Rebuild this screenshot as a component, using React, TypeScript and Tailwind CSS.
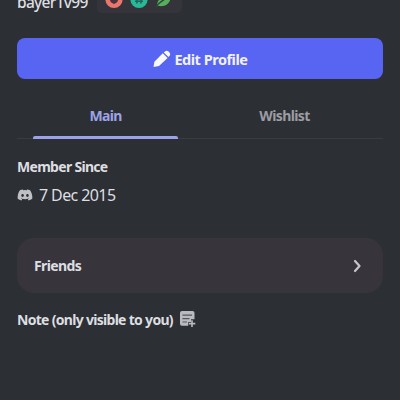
import { FaDiscord } from "react-icons/fa";

function Badges() {
  return (
    <div className="ml-[9px] h-[13px] w-[85px] rounded-b-[5px] bg-[#35343a]">
      <svg width="85" height="13" viewBox="0 0 85 13">
        <circle cx="17" cy="-.5" r="8.6" fill="#e9776d" />
        <path d="M13 0 V-4 H21 V0 C21 2 19 3 17 4 C15 3 13 2 13 0Z" fill="#49343b" />
        <circle cx="42" cy="-.5" r="8.6" fill="#28b999" />
        <path d="M40.5 -4 L39.8 3.5 M44.5 -4 L43.8 3.5 M38 1.2 H46" stroke="#20645b" strokeWidth="1.6" />
        <path d="M60 6 C60 0 64 -4 74 -5 C74 2 70 7 62 6Z" fill="#58ae5f" />
        <path d="M59 7 C63 1 67 0 71 -3" stroke="#294b35" strokeWidth="1.5" fill="none" />
      </svg>
    </div>
  );
}

function PencilIcon() {
  return (
    <svg width="18" height="18" viewBox="0 0 18 18" fill="#f8f8ff">
      <path d="M.5 17 L1.4 11.7 L9.8 3.3 L14.6 8 L6 16Z" />
      <path d="M10.8 2.4 L12.2 1.2 Q14 .1 15.5 1.5 L16.5 2.5 Q17.9 4 16.8 5.6 L15.5 7.1Z" />
    </svg>
  );
}

function NoteIcon() {
  return (
    <svg className="-mt-[2px]" width="17" height="17" viewBox="0 0 17 17" fill="none">
      <path d="M2 0 H12.5 Q14.5 0 14.5 2 V8.3 H11 V11 H8.2 V14.8 H2 Q0 14.8 0 12.8 V2 Q0 0 2 0Z" fill="#b9babf" />
      <path d="M2.4 4.2 H12 M2.4 7.7 H9.5 M2.4 11 H7" stroke="#55565b" strokeWidth="1.2" />
      <path d="M12 9.2 V16 M8.8 12.6 H15.3" stroke="#b9babf" strokeWidth="1.6" />
    </svg>
  );
}

export default function App() {
  return (
    <main className="h-[400px] w-[400px] overflow-hidden bg-[#2c2f33] px-[17px] font-['Noto_Sans',sans-serif] text-[14px] leading-5 font-semibold text-[#dddee1]">
      <header className="flex h-[38px] items-start">
        <span className="-mt-[8px] w-[71px] text-[15.5px] font-medium tracking-[-0.7px] whitespace-nowrap">bayer1v99</span>
        <Badges />
      </header>
      <button className="flex h-[41px] w-[366px] items-center justify-center rounded-[8px] bg-[#5865f2] pt-px text-[#f1f2ff]">
        <span className="-mt-px mr-[4px]"><PencilIcon /></span>
        <span className="w-[73px] text-left text-[14.5px] font-bold tracking-[-0.5px] whitespace-nowrap">Edit Profile</span>
      </button>
      <nav className="flex h-[60px] border-b border-[#3b3c42] pl-4">
        <div className="flex h-[60px] w-[145px] flex-col justify-between pt-[27px] text-center text-[#9ca3e8]">
          <span className="font-bold tracking-[-0.7px]">Main</span>
          <span className="h-[3px] rounded-t-[2px] bg-[#9aa2ea]" />
        </div>
        <span className="ml-[34px] w-[145px] pt-[27px] text-center font-bold tracking-[-0.6px] text-[#9c9da3]">Wishlist</span>
      </nav>
      <section className="h-[99px] pt-[18px]">
        <h2 className="font-bold tracking-[-0.7px] whitespace-nowrap">Member Since</h2>
        <div className="mt-[7px] flex items-center gap-[6px] text-[16px] leading-[22px] font-normal">
          <FaDiscord className="-mt-px" size={16} color="#bfc0c5" />
          <span className="tracking-[-0.6px] whitespace-nowrap">7 Dec 2015</span>
        </div>
      </section>
      <button className="flex h-[55px] w-[366px] items-center justify-between rounded-[17px] bg-[#37353b] pt-px pr-[22px] pl-[17px]">
        <span className="font-bold tracking-[-0.6px]">Friends</span>
        <svg className="-mt-px" width="8" height="14" viewBox="0 0 8 14" fill="none" stroke="#c5c5ca" strokeWidth="2.2" strokeLinecap="round" strokeLinejoin="round"><path d="M2 2 L6.5 7 L2 12" /></svg>
      </button>
      <div className="mt-[17px] flex items-center">
        <span className="w-[163px] font-bold tracking-[-0.7px] whitespace-nowrap">Note (only visible to you)</span>
        <NoteIcon />
      </div>
    </main>
  );
}
